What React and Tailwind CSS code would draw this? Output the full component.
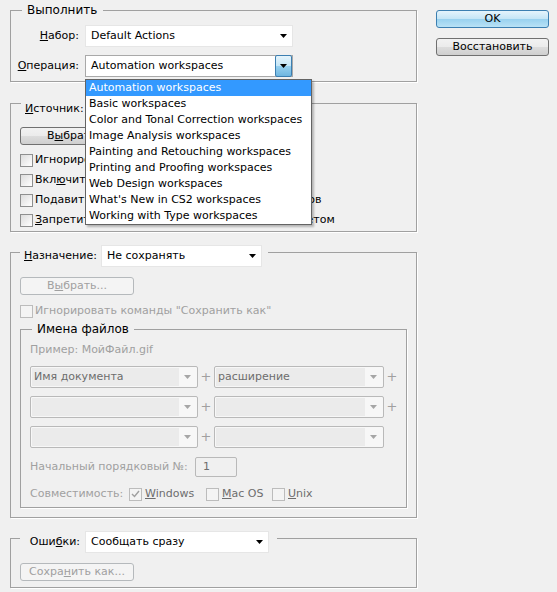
import React from 'react';

const ops = [
  'Automation workspaces',
  'Basic workspaces',
  'Color and Tonal Correction workspaces',
  'Image Analysis workspaces',
  'Painting and Retouching workspaces',
  'Printing and Proofing workspaces',
  'Web Design workspaces',
  "What's New in CS2 workspaces",
  'Working with Type workspaces',
];

function Arrow({ color = '#000' }) {
  return (
    <svg width="7" height="4" viewBox="0 0 7 4" className="shrink-0">
      <path d="M0 0h7L3.5 4z" fill={color} />
    </svg>
  );
}

function Select({ value, className = '' }) {
  return (
    <div className={`flex h-[22px] items-center justify-between border border-[#e6e6e6] bg-white pl-[5px] pr-[5px] text-black ${className}`}>
      <span>{value}</span>
      <Arrow />
    </div>
  );
}

// disabled combo used in the file name rows
function DimSelect({ value = '', className = '' }) {
  return (
    <div className={`flex h-[22px] rounded-[2px] border border-[#b9b9b9] bg-[#f7f7f7] p-[1px] ${className}`}>
      <div className="flex flex-1 items-center bg-[#ebebeb] pl-[2px] text-[#6d6d6d]">{value}</div>
      <div className="flex w-[17px] items-center justify-center">
        <Arrow color="#a6a6a6" />
      </div>
    </div>
  );
}

function Plus() {
  return <div className="flex w-[16px] items-center justify-center text-[13px] text-[#a0a0a0]">+</div>;
}

function Check({ disabled, checked }) {
  return (
    <div
      className={`flex h-[13px] w-[13px] shrink-0 items-center justify-center border ${
        disabled ? 'border-[#bcbcbc] bg-[#f4f4f4]' : 'border-[#8e8f8f] bg-[linear-gradient(135deg,#dcdcdc,#ffffff)]'
      }`}
    >
      {checked && (
        <svg width="9" height="8" viewBox="0 0 9 8">
          <path d="M1 4l2.5 2.5L8 1" fill="none" stroke="#a0a0a0" strokeWidth="1.4" />
        </svg>
      )}
    </div>
  );
}

function Btn({ children, disabled, className = '' }) {
  return (
    <div
      className={`flex h-[18px] items-center justify-center rounded-[3px] border ${
        disabled
          ? 'border-[#b5b9bc] bg-[#f4f4f4] text-[#a0a0a0]'
          : 'border-[#707070] bg-[linear-gradient(#f2f2f2_0%,#ebebeb_50%,#dddddd_50%,#cfcfcf_100%)] text-black'
      } ${className}`}
    >
      {children}
    </div>
  );
}

const box = 'border border-[#a0a0a0] shadow-[1px_1px_0_#ffffff]';

export default function App() {
  return (
    <div className="relative h-[592px] w-[557px] overflow-hidden bg-[#f0f0f0] font-['DejaVu_Sans',sans-serif] text-[11px] leading-[14px] text-black">
      <div className="flex pl-[10px]">
        {/* left column */}
        <div className="w-[407px]">
          {/* Выполнить */}
          <fieldset className={`mt-[3px] ${box}`}>
            <legend className="ml-[11px] pl-[5px] pr-[6px] text-[12px]">Выполнить</legend>
            <div className="flex flex-col gap-[8px] pb-[4px] pt-[8px]">
              <div className="flex items-center">
                <div className="w-[68px] text-right"><u>Н</u>абор:</div>
                <Select value="Default Actions" className="ml-[6px] w-[208px]" />
              </div>
              <div className="flex items-center">
                <div className="w-[68px] text-right"><u>О</u>перация:</div>
                <div className="ml-[6px] flex h-[22px] w-[208px] items-center border border-[#a9a9a9] bg-white">
                  <span className="flex-1 pl-[5px]">Automation workspaces</span>
                  <div className="flex h-[22px] w-[17px] items-center justify-center rounded-[2px] border border-[#3c7fb1] bg-[linear-gradient(#e5f4fc_0%,#c4e5f6_50%,#98d1ef_50%,#6fb6e0_100%)]">
                    <Arrow />
                  </div>
                </div>
              </div>
            </div>
          </fieldset>

          {/* Источник */}
          <fieldset className={`mt-[4px] ${box}`}>
            <legend className="ml-[10px] pl-[4px] pr-[6px] pt-[12px]">
              <div className="flex items-center">
                <div className="w-[56px]"><u>И</u>сточник:</div>
                <Select value="Папка" className="ml-[4px] w-[208px]" />
              </div>
            </legend>
            <div className="pb-[1px] pl-[9px]">
              <Btn className="mt-[7px] w-[114px]">В<u>ы</u>брать...</Btn>
              <div className="mt-[5px]">
                {[
                  <>Игнорировать команды "Открыть"</>,
                  <>Вкл<u>ю</u>чить все вложенные папки</>,
                  <>Подавить диалоги параметров открытия файлов</>,
                  <><u>З</u>апретить сообщения системы управления цветом</>,
                ].map((t, i) => (
                  <div key={i} className="flex h-[20px] items-center gap-[2px]">
                    <Check />
                    <span>{t}</span>
                  </div>
                ))}
              </div>
            </div>
          </fieldset>

          {/* Назначение */}
          <fieldset className={`mt-[6px] ${box}`}>
            <legend className="ml-[9px] pl-[4px] pr-[6px] pt-[7px]">
              <div className="flex items-center">
                <div className="w-[73px]"><u>Н</u>азначение:</div>
                <Select value="Не сохранять" className="ml-[4px] w-[161px]" />
              </div>
            </legend>
            <div className="pb-[9px]">
              <div className="pl-[9px]">
                <Btn disabled className="mt-[10px] w-[114px]">В<u>ы</u>брать...</Btn>
                <div className="mt-[8px] flex h-[16px] items-center gap-[2px] text-[#a0a0a0]">
                  <Check disabled />
                  <span>Игнорировать команды "Сохранить как"</span>
                </div>
              </div>

              {/* Имена файлов */}
              <fieldset className={`mx-[9px] mt-[3px] ${box}`}>
                <legend className="ml-[11px] pl-[5px] pr-[5px] text-[12px]">Имена файлов</legend>
                <div className="pb-[5px] pl-[9px]">
                  <div className="mt-[7px] h-[14px] text-[#a0a0a0]">Пример: МойФайл.gif</div>
                  <div className="mt-[9px] flex flex-col gap-[8px]">
                    <div className="flex">
                      <DimSelect value="Имя документа" className="w-[168px]" />
                      <Plus />
                      <DimSelect value="расширение" className="w-[170px]" />
                      <Plus />
                    </div>
                    <div className="flex">
                      <DimSelect className="w-[168px]" />
                      <Plus />
                      <DimSelect className="w-[170px]" />
                      <Plus />
                    </div>
                    <div className="flex">
                      <DimSelect className="w-[168px]" />
                      <Plus />
                      <DimSelect className="w-[170px]" />
                    </div>
                  </div>
                  <div className="mt-[9px] flex items-center">
                    <div className="w-[165px] text-[#a0a0a0]">Начальный порядковый №:</div>
                    <div className="flex h-[20px] w-[42px] items-center rounded-[2px] border border-[#b9b9b9] bg-[#f0f0f0] pl-[7px] text-[#6d6d6d]">1</div>
                  </div>
                  <div className="mt-[9px] flex h-[16px] items-center">
                    <div className="w-[99px] text-[#a0a0a0]">Совместимость:</div>
                    <div className="flex w-[77px] items-center gap-[3px] text-[#6d6d6d]">
                      <Check disabled checked />
                      <span><u>W</u>indows</span>
                    </div>
                    <div className="flex w-[66px] items-center gap-[3px] text-[#6d6d6d]">
                      <Check disabled />
                      <span><u>M</u>ac OS</span>
                    </div>
                    <div className="flex items-center gap-[3px] text-[#6d6d6d]">
                      <Check disabled />
                      <span><u>U</u>nix</span>
                    </div>
                  </div>
                </div>
              </fieldset>
            </div>
          </fieldset>

          {/* Ошибки */}
          <fieldset className={`mt-[5px] ${box}`}>
            <legend className="ml-[9px] pr-[8px] pt-[8px]">
              <div className="flex items-center">
                <div className="w-[60px] text-right">Оши<u>б</u>ки:</div>
                <Select value="Сообщать сразу" className="ml-[5px] w-[184px]" />
              </div>
            </legend>
            <div className="pb-[6px] pl-[9px]">
              <Btn disabled className="mt-[10px] w-[114px]">Сохра<u>н</u>ить как...</Btn>
            </div>
          </fieldset>
        </div>

        {/* right column */}
        <div className="ml-[19px] mt-[10px] flex w-[113px] flex-col gap-[10px]">
          <div className="flex h-[18px] items-center justify-center rounded-[3px] border border-[#3c7fb1] bg-[linear-gradient(#e5f4fc_0%,#c4e5f6_50%,#98d1ef_50%,#b9e2f6_100%)]">
            OK
          </div>
          <Btn>Восстановить</Btn>
        </div>
      </div>

      {/* open list of Операция */}
      <div className="absolute left-[85px] top-[79px] w-[227px] border border-[#646464] bg-white shadow-[2px_2px_2px_rgba(0,0,0,0.25)]">
        {ops.map((o, i) => (
          <div key={o} className={`h-[16px] pl-[3px] leading-[16px] ${i === 0 ? 'bg-[#3399ff] text-white' : ''}`}>
            {o}
          </div>
        ))}
      </div>
    </div>
  );
}
